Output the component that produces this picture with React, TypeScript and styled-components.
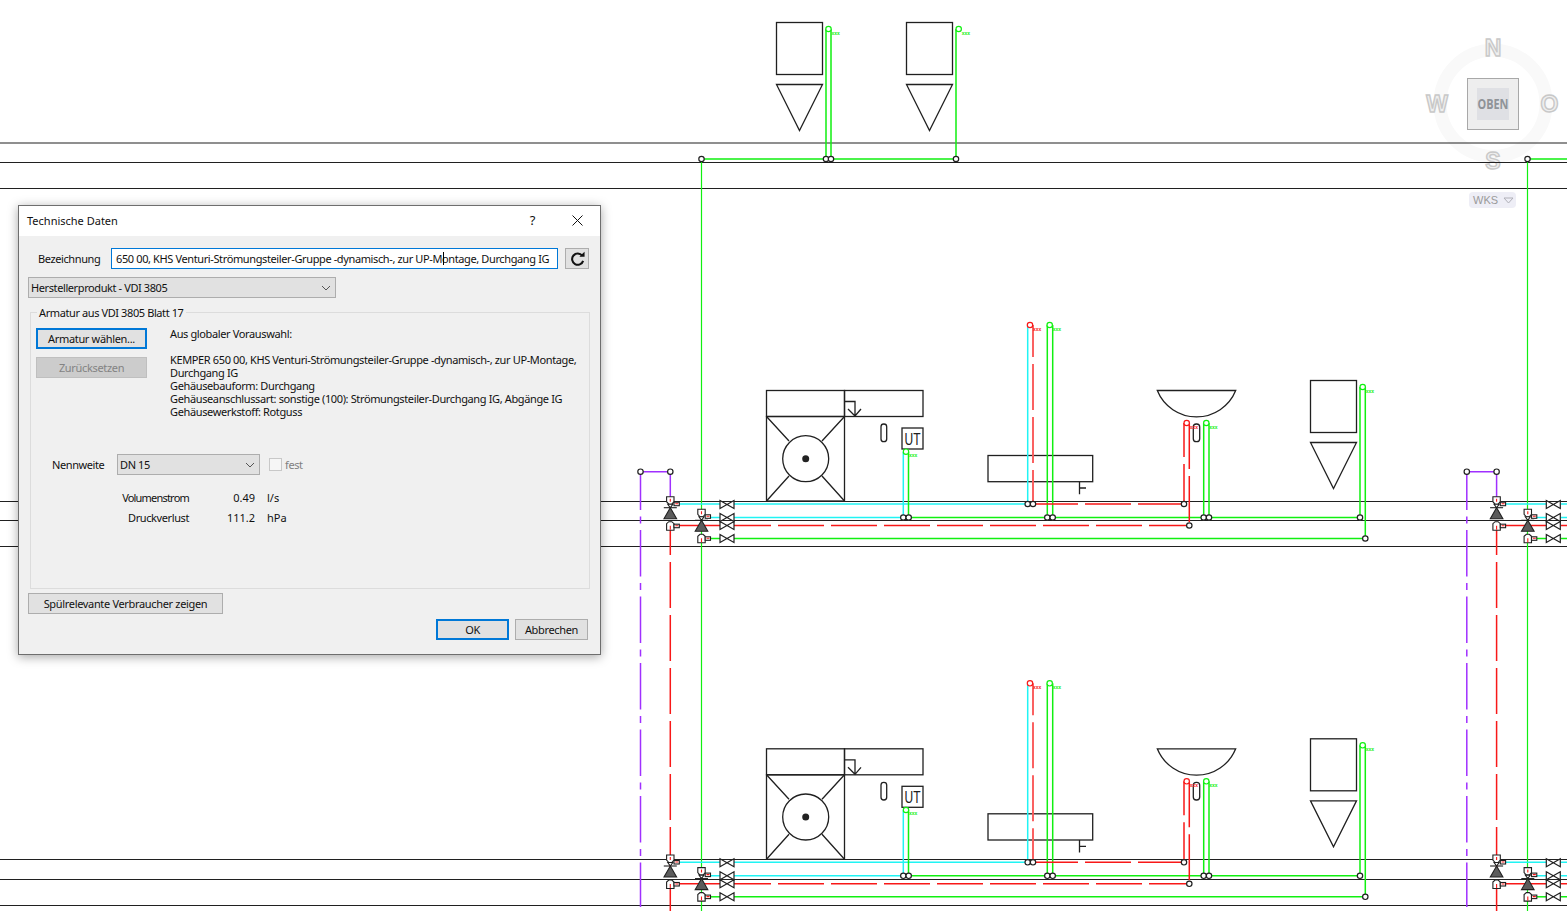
import styled, { createGlobalStyle } from "styled-components";

const GlobalStyle = createGlobalStyle`
  html, body {
    margin: 0;
    padding: 0;
    background: #fff;
    overflow: hidden;
  }
  #root {
    height: 911px;
  }
`;

const Page = styled.div`
  position: relative;
  width: 1567px;
  height: 911px;
  overflow: hidden;
  background: #fff;
  font-family: "Noto Sans", "Liberation Sans", sans-serif;
`;
const Canvas = styled.svg`
  display: block;
`;
const WksBadge = styled.div`
  position: absolute;
  left: 1469px;
  top: 192px;
  width: 47px;
  height: 16px;
  border-radius: 4px;
  background: #eeeef6;
  color: #9a9a9a;
  font-family: "Liberation Sans", sans-serif;
  font-size: 11px;
  display: flex;
  align-items: center;
  gap: 5px;
  padding-left: 4px;
  box-sizing: border-box;
`;
const Dialog = styled.div`
  position: absolute;
  left: 18px;
  top: 205px;
  width: 583px;
  height: 450px;
  box-sizing: border-box;
  border: 1px solid #6e6e6e;
  background: #f0f0f0;
  box-shadow: 0 2px 10px rgba(0, 0, 0, 0.35);
  color: #111;
  font-family: "Noto Sans", "Liberation Sans", sans-serif;
  font-size: 11px;
  letter-spacing: -0.4px;
  display: flex;
  flex-direction: column;
`;
const TitleBar = styled.div`
  height: 30px;
  flex: none;
  box-sizing: border-box;
  padding: 0 0 2px 8px;
  background: #fff;
  display: flex;
  align-items: center;
  letter-spacing: 0;
`;
const Title = styled.span`
  flex: 1;
`;
const TitleIcon = styled.span`
  width: 45px;
  display: flex;
  justify-content: center;
  font-size: 13px;
`;
const Body = styled.div`
  flex: 1;
  display: flex;
  flex-direction: column;
  position: relative;
`;
const NameRow = styled.div`
  display: flex;
  align-items: center;
  margin: 12px 12px 0 19px;
  height: 21px;
`;
const NameLabel = styled.label`
  width: 73px;
  flex: none;
`;
const NameField = styled.div`
  position: relative;
  width: 447px;
  height: 21px;
  flex: none;
  box-sizing: border-box;
  border: 1px solid #0078d7;
  background: #fff;
  display: flex;
  align-items: center;
  padding-left: 4px;
  white-space: nowrap;
  letter-spacing: -0.38px;
`;
const Caret = styled.span`
  position: absolute;
  left: 331px;
  top: 3px;
  width: 1px;
  height: 13px;
  background: #000;
`;
const IconButton = styled.button`
  margin-left: 7px;
  width: 24px;
  height: 21px;
  flex: none;
  padding: 0;
  border: 1px solid #adadad;
  background: #e1e1e1;
  display: flex;
  align-items: center;
  justify-content: center;
`;
const Select = styled.div<{ $width: number }>`
  width: ${(p) => p.$width}px;
  height: 21px;
  box-sizing: border-box;
  border: 1px solid #adadad;
  background: #e1e1e1;
  display: flex;
  align-items: center;
  justify-content: space-between;
  padding: 0 4px 0 2px;
`;
const TypeSelectRow = styled.div`
  margin: 8px 0 0 9px;
`;
const Group = styled.fieldset`
  margin: 8px 10px 0 11px;
  padding: 0;
  height: 283px;
  box-sizing: border-box;
  border: 1px solid #dcdcdc;
  min-width: 0;
`;
const Legend = styled.legend`
  margin-left: 6px;
  padding: 0 2px;
  line-height: 13px;
`;
const GroupTop = styled.div`
  display: grid;
  grid-template-columns: 111px 1fr;
  column-gap: 23px;
  height: 135px;
  padding: 9px 0 0 5px;
  box-sizing: border-box;
`;
const ButtonStack = styled.div`
  display: flex;
  flex-direction: column;
  gap: 8px;
`;
const Button = styled.button<{ $width?: number; $primary?: boolean; $disabled?: boolean }>`
  width: ${(p) => (p.$width ? `${p.$width}px` : "100%")};
  height: 21px;
  box-sizing: border-box;
  padding: 0;
  font: inherit;
  letter-spacing: -0.33px;
  color: ${(p) => (p.$disabled ? "#838383" : "#111")};
  background: ${(p) => (p.$disabled ? "#cccccc" : "#e1e1e1")};
  border: ${(p) => (p.$primary ? "2px solid #0078d7" : p.$disabled ? "1px solid #bfbfbf" : "1px solid #adadad")};
`;
const InfoText = styled.div`
  line-height: 13px;
  margin-top: -1px;
  white-space: pre;
  letter-spacing: -0.37px;
`;
const SizeRow = styled.div`
  display: flex;
  align-items: center;
  height: 21px;
  padding-left: 21px;
`;
const SizeLabel = styled.label`
  width: 65px;
`;
const Checkbox = styled.span`
  margin-left: 9px;
  width: 13px;
  height: 13px;
  box-sizing: border-box;
  border: 1px solid #c8c8c8;
  background: #f6f6f6;
`;
const DisabledLabel = styled.span`
  margin-left: 3px;
  color: #808080;
`;
const Values = styled.div`
  margin-top: 12px;
  display: grid;
  grid-template-columns: 158px 66px auto;
  grid-auto-rows: 20px;
  align-items: center;
  justify-content: start;
`;
const ValueLabel = styled.span<{ $tight?: boolean }>`
  text-align: right;
  letter-spacing: ${(p) => (p.$tight ? "-0.8px" : "-0.4px")};
`;
const ValueNumber = styled.span`
  text-align: right;
  letter-spacing: 0;
`;
const ValueUnit = styled.span`
  padding-left: 12px;
  letter-spacing: 0;
`;
const FlushRow = styled.div`
  margin: 4px 0 0 9px;
`;
const Footer = styled.div`
  display: flex;
  justify-content: flex-end;
  gap: 6px;
  margin: 5px 12px 0 0;
`;

const INK = "#202020";
const GREEN = "#10f010";
const CYAN = "#20f4f4";
const RED = "#f81818";
const PURPLE = "#a030ff";

function Chevron() {
  return (
    <svg width="10" height="6" viewBox="0 0 10 6">
      <path d="M1 1 L5 5 L9 1" fill="none" stroke="#555" strokeWidth="1" />
    </svg>
  );
}

function Node({ x, y, color = INK }: { x: number; y: number; color?: string }) {
  return <circle cx={x} cy={y} r={2.7} fill="#fff" stroke={color} strokeWidth={1.2} />;
}

function Tag({ x, y, color }: { x: number; y: number; color: string }) {
  return (
    <>
      <Node x={x} y={y} color={color} />
      <text x={x + 3} y={y + 5.5} fontSize="5" fontFamily="Liberation Sans" fontWeight="700" fill={color}>
        xxx
      </text>
    </>
  );
}

function Pipe({ d, color, w = 1.5, dash, offset }: { d: string; color: string; w?: number; dash?: string; offset?: number }) {
  return <path d={d} fill="none" stroke={color} strokeWidth={w} strokeDasharray={dash} strokeDashoffset={offset} />;
}

function Tank({ x, y }: { x: number; y: number }) {
  return (
    <g fill="none" stroke={INK} strokeWidth={1.3}>
      <rect x={x} y={y} width={46} height={52} />
      <path d={`M${x} ${y + 62} H${x + 46} L${x + 23} ${y + 108} Z`} />
    </g>
  );
}

function Bowtie({ x, y, h = 8 }: { x: number; y: number; h?: number }) {
  const t = y - h / 2;
  const b = y + h / 2;
  return (
    <path
      d={`M${x} ${t} L${x + 14} ${b} V${t} L${x} ${b} Z`}
      fill="#fff"
      stroke={INK}
      strokeWidth={1.2}
    />
  );
}

function Valve({ x, y }: { x: number; y: number }) {
  return (
    <g transform={`translate(${x} ${y})`} strokeWidth={1.1}>
      <path d="M-3.7 0 H3.7 V5 L1.5 7.5 H-1.5 L-3.7 5 Z" fill="#fff" stroke={INK} />
      <rect x={3.7} y={5.5} width={5.3} height={3.5} fill="#fff" stroke={INK} />
      <path d="M0 2 V5 M5 7 H8" stroke={RED} />
      <path d="M-6.5 11 H6.5" stroke={INK} />
      <path d="M-2.5 7.5 L2.5 7.5 L0 11 Z" fill="#fff" stroke={INK} />
      <path d="M0 11 L6.3 22 H-6.3 Z" fill="#5c5c5c" stroke="#222" />
      <path d="M-1.5 25 H1.5 L3.7 27 V33.5 H-3.7 V27 Z" fill="#fff" stroke={INK} />
      <rect x={3.7} y={27.5} width={5.3} height={3.5} fill="#fff" stroke={INK} />
      <path d="M0 29 V33 M5 29 H8" stroke={RED} />
    </g>
  );
}

// one pair of risers with their stop valves, dx/dy from the first floor group
function ValveGroup({ dx, dy }: { dx: number; dy: number }) {
  return (
    <g transform={`translate(${dx} ${dy})`}>
      <Pipe d="M679 504 H720 M709 517.5 H720" color={CYAN} />
      <Pipe d="M679 525.5 H720" color={RED} />
      <Pipe d="M709 538.5 H720" color={GREEN} />
      <Valve x={670.3} y={496.7} />
      <Valve x={701.5} y={509.3} />
      <Bowtie x={720} y={504.5} />
      <Bowtie x={720} y={517.5} />
      <Bowtie x={720} y={525.5} />
      <Bowtie x={720} y={538.5} />
    </g>
  );
}

function Floor({ dy }: { dy: number }) {
  return (
    <g transform={`translate(0 ${dy})`}>
      <g fill="none" stroke={INK} strokeWidth={1.3}>
        <rect x={766.5} y={390.5} width={78} height={26} />
        <rect x={844.5} y={390.5} width={78.5} height={26} />
        <rect x={766.5} y={416.5} width={78} height={84.5} />
        <circle cx={805.7} cy={458.7} r={23} />
        <path d="M766.5 416.5 L789 441 M844.5 416.5 L822 441 M766.5 501 L789 476 M844.5 501 L822 476" />
        <path d="M845 401.5 H855 V416 M848 409 L855 416 L861 409" />
        <rect x={881} y={424} width={5.7} height={17.7} rx={2.8} />
        <rect x={902} y={428} width={21} height={21} />
        <rect x={988} y={455.5} width={104.7} height={26.2} />
        <path d="M1079.5 481.7 V494.3 M1079.5 488 H1086" />
        <path d="M1157.3 390.5 H1235.7 A42.3 42.3 0 0 1 1157.3 390.5 Z" />
        <rect x={1193.3} y={424} width={6.4} height={17.7} rx={3} />
      </g>
      <circle cx={805.7} cy={458.7} r={3.5} fill="#222" />
      <text x={912.5} y={445} fontSize="17" fontFamily="Liberation Sans" textAnchor="middle" textLength={16} lengthAdjust="spacingAndGlyphs" fill={INK}>
        UT
      </text>
      <Tank x={1310.5} y={380.5} />

      <Pipe d="M734 504 H1028 M734 517.5 H903.3 M1027.7 325 V504 M903.3 452 V517.5" color={CYAN} />
      <Pipe d="M734 538.5 H1365.3 M908.7 517.5 H1360 M908.5 452 V517.5 M1047.3 325 V517.5 M1052.7 325 V517.5 M1203.7 423 V517.5 M1209 423 V517.5 M1360 387 V517.5 M1365.3 387 V538.5" color={GREEN} />
      <Pipe d="M734 525.5 H1189.3" color={RED} dash="46 7" offset={9} />
      <Pipe d="M1033 504 H1184" color={RED} dash="46 7" offset={1} />
      <Pipe d="M1033 325 V504" color="#fa5a5a" w={1.9} dash="46 7" offset={14} />
      <Pipe d="M1184 423 V504" color={RED} dash="46 7" offset={12} />
      <Pipe d="M1189.3 423 V525.5" color={RED} dash="46 7" />

      <Tag x={1030} y={325} color={RED} />
      <Tag x={1049.7} y={325} color={GREEN} />
      <Tag x={906} y={451.7} color={GREEN} />
      <Tag x={1186.7} y={423} color={RED} />
      <Tag x={1206.3} y={423} color={GREEN} />
      <Tag x={1362.7} y={387} color={GREEN} />
      {[
        [903.3, 517.5],
        [908.7, 517.5],
        [1027.7, 504],
        [1033, 504],
        [1047.3, 517.5],
        [1052.7, 517.5],
        [1184, 504],
        [1189.3, 525.5],
        [1203.7, 517.5],
        [1209, 517.5],
        [1360, 517.5],
        [1365.3, 538.5],
      ].map(([x, y]) => (
        <Node key={`${x}-${y}`} x={x} y={y} />
      ))}
    </g>
  );
}

function Risers({ dx }: { dx: number }) {
  return (
    <g transform={`translate(${dx} 0)`}>
      <Pipe d="M640.5 471.7 H670.3 M670.3 471.7 V497" color={PURPLE} />
      <Pipe d="M640.5 471.7 V907" color={PURPLE} dash="46.5 6.5 7 6.5" offset={8.2} />
      <Pipe d="M670.3 525 V911" color={RED} dash="46 7" offset={16} />
      <Node x={640.5} y={471.7} />
      <Node x={670.3} y={471.7} />
    </g>
  );
}

function Compass() {
  const letter = {
    fontFamily: "Liberation Sans",
    fontWeight: 700,
    fontSize: 23,
    fill: "#efefef",
    stroke: "#c8c8c8",
    strokeWidth: 1.4,
    textAnchor: "middle" as const,
  };
  return (
    <g>
      <circle cx={1493} cy={103.3} r={53} fill="none" stroke="#f9f9f9" strokeWidth={13} />
      <rect x={1467.5} y={78.5} width={51} height={51} fill="#eeeeee" stroke="#a8a8a8" />
      <rect x={1477} y={88} width={32} height={32} fill="#dfe0e4" />
      <text x={1493} y={109} fontFamily="Open Sans" fontWeight="700" fontSize="15" textAnchor="middle" textLength={31} lengthAdjust="spacingAndGlyphs" fill="#8f9398">
        OBEN
      </text>
      <text x={1493} y={56} {...letter}>N</text>
      <text x={1437} y={112} {...letter}>W</text>
      <text x={1549.5} y={112} {...letter}>O</text>
      <text x={1493} y={169} {...letter}>S</text>
    </g>
  );
}

function Drawing() {
  return (
    <Canvas width={1567} height={911} viewBox="0 0 1567 911">
      <Compass />
      <path
        d="M0 143 H1567 M0 162.5 H1567 M0 188.5 H1567 M0 501.5 H1567 M0 520.5 H1567 M0 546.5 H1567 M0 859.5 H1567 M0 879.5 H1567 M0 905.5 H1567"
        fill="none"
        stroke={INK}
        strokeWidth={1.2}
      />
      <Tank x={776.5} y={22.5} />
      <Tank x={906.5} y={22.5} />
      <Pipe d="M701.5 159 H956 M826 29 V159 M831 29 V159 M956 29 V159 M1527.5 159 H1567" color={GREEN} />
      <Pipe d="M701.5 159 V911 M1527.5 159 V911" color={GREEN} w={1.2} />
      <Tag x={828.5} y={29} color={GREEN} />
      <Tag x={958.7} y={29} color={GREEN} />
      <Node x={701.5} y={159} />
      <Node x={826} y={159} />
      <Node x={831} y={159} />
      <Node x={956} y={159} />
      <Node x={1527.5} y={159} />
      <Floor dy={0} />
      <Floor dy={358.3} />
      <Risers dx={0} />
      <Risers dx={826.3} />
      <ValveGroup dx={0} dy={0} />
      <ValveGroup dx={0} dy={358.3} />
      <ValveGroup dx={826.3} dy={0} />
      <ValveGroup dx={826.3} dy={358.3} />
      <Pipe d="M1561 504 H1567 M1561 517.5 H1567" color={CYAN} />
      <Pipe d="M1561 538.5 H1567 M1561 896.8 H1567" color={GREEN} />
      <Pipe d="M1561 862.3 H1567 M1561 875.8 H1567" color={CYAN} />
      <Pipe d="M1561 525.5 H1567 M1561 883.8 H1567" color={RED} />
    </Canvas>
  );
}

export default function App() {
  return (
    <Page>
      <GlobalStyle />
      <Drawing />
      <WksBadge>
        WKS
        <svg width="11" height="7" viewBox="0 0 11 7">
          <path d="M1 1 H10 L5.5 6 Z" fill="none" stroke="#b0b0b8" />
        </svg>
      </WksBadge>
      <Dialog>
        <TitleBar>
          <Title>Technische Daten</Title>
          <TitleIcon>?</TitleIcon>
          <TitleIcon>
            <svg width="11" height="11" viewBox="0 0 11 11">
              <path d="M0.5 0.5 L10.5 10.5 M10.5 0.5 L0.5 10.5" stroke="#111" strokeWidth="1" />
            </svg>
          </TitleIcon>
        </TitleBar>
        <Body>
          <NameRow>
            <NameLabel>Bezeichnung</NameLabel>
            <NameField>
              650 00, KHS Venturi-Strömungsteiler-Gruppe -dynamisch-, zur UP-Montage, Durchgang IG
              <Caret />
            </NameField>
            <IconButton>
              <svg width="15" height="15" viewBox="0 0 16 16">
                <path d="M13 5 A6 6 0 1 0 14 10.5" fill="none" stroke="#111" strokeWidth="2.2" />
                <path d="M10 6 H15.5 V0.8 Z" fill="#111" />
              </svg>
            </IconButton>
          </NameRow>
          <TypeSelectRow>
            <Select $width={308}>
              Herstellerprodukt - VDI 3805
              <Chevron />
            </Select>
          </TypeSelectRow>
          <Group>
            <Legend>Armatur aus VDI 3805 Blatt 17</Legend>
            <GroupTop>
              <ButtonStack>
                <Button $primary>Armatur wählen...</Button>
                <Button $disabled>Zurücksetzen</Button>
              </ButtonStack>
              <InfoText>
                {"Aus globaler Vorauswahl:\n\nKEMPER 650 00, KHS Venturi-Strömungsteiler-Gruppe -dynamisch-, zur UP-Montage,\nDurchgang IG\nGehäusebauform: Durchgang\nGehäuseanschlussart: sonstige (100): Strömungsteiler-Durchgang IG, Abgänge IG\nGehäusewerkstoff: Rotguss"}
              </InfoText>
            </GroupTop>
            <SizeRow>
              <SizeLabel>Nennweite</SizeLabel>
              <Select $width={143}>
                DN 15
                <Chevron />
              </Select>
              <Checkbox />
              <DisabledLabel>fest</DisabledLabel>
            </SizeRow>
            <Values>
              <ValueLabel $tight>Volumenstrom</ValueLabel>
              <ValueNumber>0.49</ValueNumber>
              <ValueUnit>l/s</ValueUnit>
              <ValueLabel>Druckverlust</ValueLabel>
              <ValueNumber>111.2</ValueNumber>
              <ValueUnit>hPa</ValueUnit>
            </Values>
          </Group>
          <FlushRow>
            <Button $width={195}>Spülrelevante Verbraucher zeigen</Button>
          </FlushRow>
          <Footer>
            <Button $width={73} $primary>OK</Button>
            <Button $width={73}>Abbrechen</Button>
          </Footer>
        </Body>
      </Dialog>
    </Page>
  );
}
